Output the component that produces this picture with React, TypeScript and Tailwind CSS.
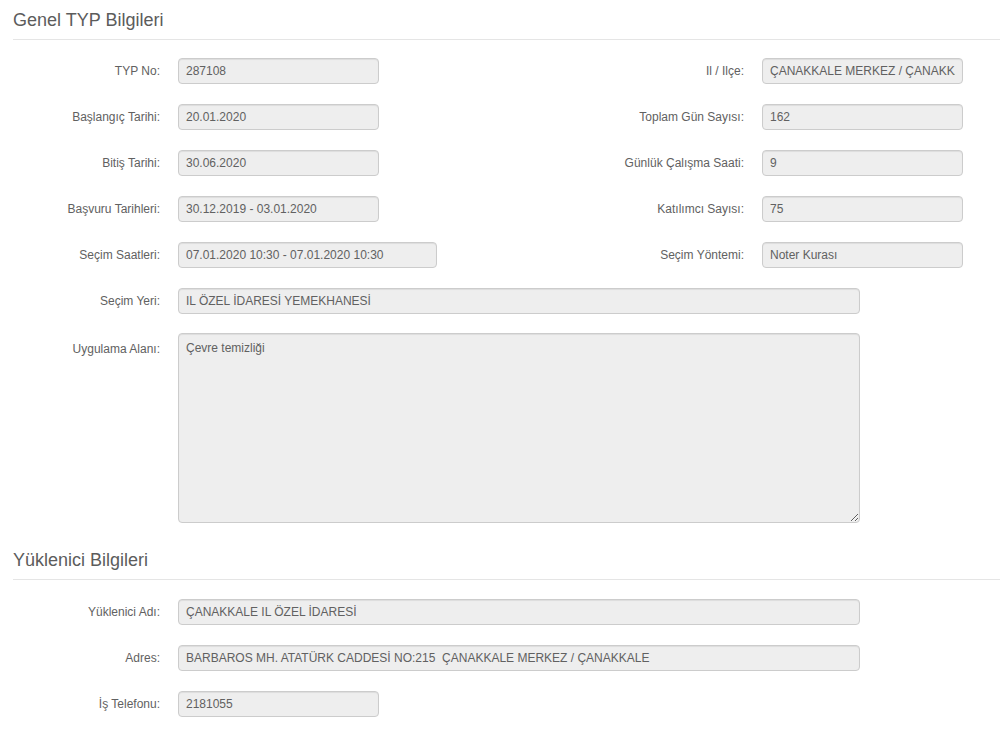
const font = "font-['Liberation_Sans',Arial,sans-serif]";

function SectionTitle({ children }: { children: React.ReactNode }) {
  return (
    <div className="ml-[13px] border-b border-[#e5e5e5] pb-[7px] pt-[8px] text-[18px] leading-[24px] text-[#5c5c5c]">
      {children}
    </div>
  );
}

function Field({
  label,
  value,
  width,
}: {
  label: string;
  value: string;
  width: string;
}) {
  return (
    <div className="flex items-center">
      <label className="w-[160px] shrink-0 text-right text-[12px] text-[#616161]">
        {label}
      </label>
      <input
        readOnly
        value={value}
        className={`ml-[18px] h-[26px] ${width} rounded-[4px] border border-[#cccccc] bg-[#eeeeee] px-[7px] text-[12px] text-[#616161] shadow-[inset_0_1px_1px_rgba(0,0,0,0.075)] outline-none`}
      />
    </div>
  );
}

function PairRow({
  left,
  right,
}: {
  left: [string, string, string];
  right?: [string, string];
}) {
  return (
    <div className="flex">
      <div className="w-[584px] shrink-0">
        <Field label={left[0]} value={left[1]} width={left[2]} />
      </div>
      {right && <Field label={right[0]} value={right[1]} width="w-[201px]" />}
    </div>
  );
}

export default function App() {
  return (
    <div className={`min-h-[729px] bg-white ${font}`}>
      <SectionTitle>Genel TYP Bilgileri</SectionTitle>

      <div className="mt-[18px] flex flex-col gap-[20px]">
        <PairRow
          left={["TYP No:", "287108", "w-[201px]"]}
          right={["Il / Ilçe:", "ÇANAKKALE MERKEZ / ÇANAKKALE"]}
        />
        <PairRow
          left={["Başlangıç Tarihi:", "20.01.2020", "w-[201px]"]}
          right={["Toplam Gün Sayısı:", "162"]}
        />
        <PairRow
          left={["Bitiş Tarihi:", "30.06.2020", "w-[201px]"]}
          right={["Günlük Çalışma Saati:", "9"]}
        />
        <PairRow
          left={["Başvuru Tarihleri:", "30.12.2019 - 03.01.2020", "w-[201px]"]}
          right={["Katılımcı Sayısı:", "75"]}
        />
        <PairRow
          left={[
            "Seçim Saatleri:",
            "07.01.2020 10:30 - 07.01.2020 10:30",
            "w-[259px]",
          ]}
          right={["Seçim Yöntemi:", "Noter Kurası"]}
        />
        <Field label="Seçim Yeri:" value="IL ÖZEL İDARESİ YEMEKHANESİ" width="w-[682px]" />
        <div className="-mt-[1px] flex items-start">
          <label className="w-[160px] shrink-0 pt-[7px] text-right text-[12px] text-[#616161]">
            Uygulama Alanı:
          </label>
          <textarea
            readOnly
            value="Çevre temizliği"
            className="ml-[18px] block h-[190px] w-[682px] rounded-[4px] border border-[#cccccc] bg-[#eeeeee] px-[7px] py-[5px] text-[12px] text-[#616161] shadow-[inset_0_1px_1px_rgba(0,0,0,0.075)] outline-none"
          />
        </div>
      </div>

      <div className="mt-[17px]">
        <SectionTitle>Yüklenici Bilgileri</SectionTitle>
      </div>

      <div className="mt-[19px] flex flex-col gap-[20px] pb-[12px]">
        <Field label="Yüklenici Adı:" value="ÇANAKKALE IL ÖZEL İDARESİ" width="w-[682px]" />
        <Field
          label="Adres:"
          value="BARBAROS MH. ATATÜRK CADDESİ NO:215  ÇANAKKALE MERKEZ / ÇANAKKALE"
          width="w-[682px]"
        />
        <Field label="İş Telefonu:" value="2181055" width="w-[201px]" />
      </div>
    </div>
  );
}
